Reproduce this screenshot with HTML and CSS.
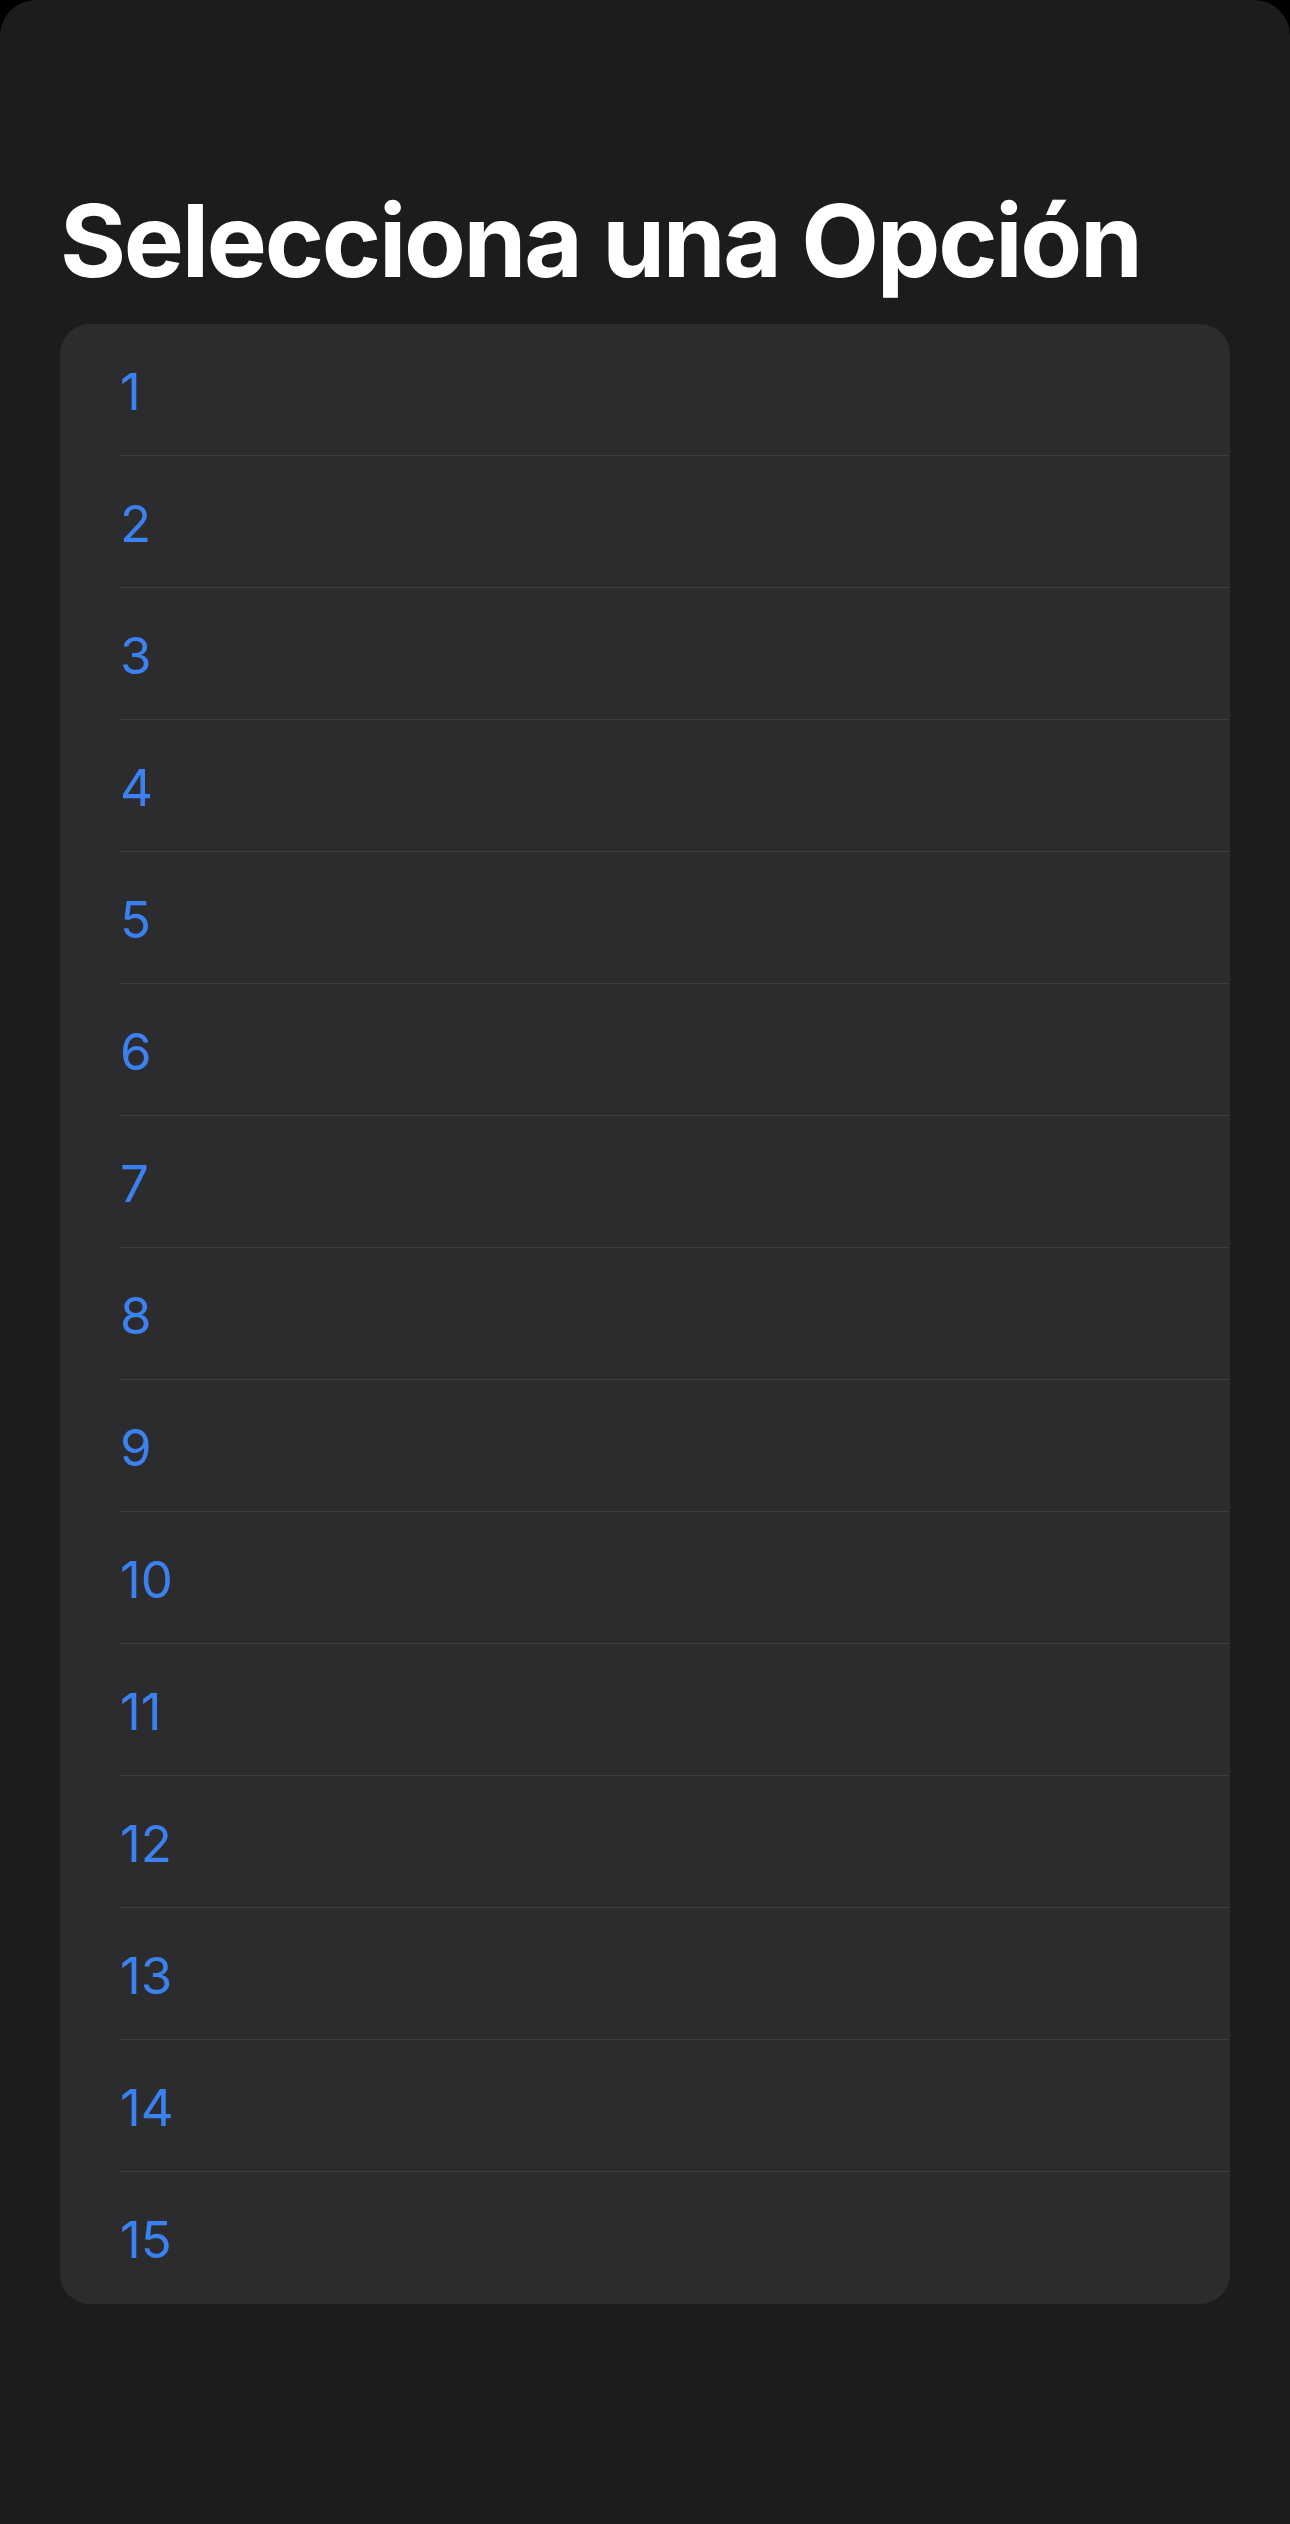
FILE: index.html
```html
<!DOCTYPE html>
<html lang="es">
<head>
<meta charset="utf-8">
<title>Selecciona una Opción</title>
<link rel="stylesheet" href="styles.css">
</head>
<body>
<div class="sheet">
  <h1 class="title">Selecciona una Opción</h1>
  <ul class="list">
    <li class="row"><span class="label">1</span></li>
    <li class="row"><span class="label">2</span></li>
    <li class="row"><span class="label">3</span></li>
    <li class="row"><span class="label">4</span></li>
    <li class="row"><span class="label">5</span></li>
    <li class="row"><span class="label">6</span></li>
    <li class="row"><span class="label">7</span></li>
    <li class="row"><span class="label">8</span></li>
    <li class="row"><span class="label">9</span></li>
    <li class="row"><span class="label">10</span></li>
    <li class="row"><span class="label">11</span></li>
    <li class="row"><span class="label">12</span></li>
    <li class="row"><span class="label">13</span></li>
    <li class="row"><span class="label">14</span></li>
    <li class="row"><span class="label">15</span></li>
  </ul>
</div>
</body>
</html>
```
FILE: styles.css
```css
html, body {
  margin: 0;
  padding: 0;
  background: #000;
}
body {
  font-family: Inter, "Liberation Sans", sans-serif;
}
.sheet {
  background: #1c1c1e;
  border-radius: 36px 36px 0 0;
  min-height: 2524px;
  box-sizing: border-box;
  padding: 179px 60px 0 60px;
}
.title {
  margin: 0 0 23px 0;
  font-size: 101px;
  line-height: 122px;
  font-weight: 700;
  color: #fff;
  letter-spacing: -2.3px;
}
.list {
  list-style: none;
  margin: 0;
  padding: 0;
  background: #2c2c2e;
  border-radius: 30px;
  overflow: hidden;
}
.row {
  height: 132px;
  box-sizing: border-box;
  margin-left: 60px;
  display: flex;
  align-items: center;
  padding-top: 3px;
  border-bottom: 1px solid #3d3d40;
}
.row:last-child {
  border-bottom: none;
}
.label {
  font-size: 51px;
  font-weight: 400;
  color: #3b82f0;
  line-height: 1;
}
```
